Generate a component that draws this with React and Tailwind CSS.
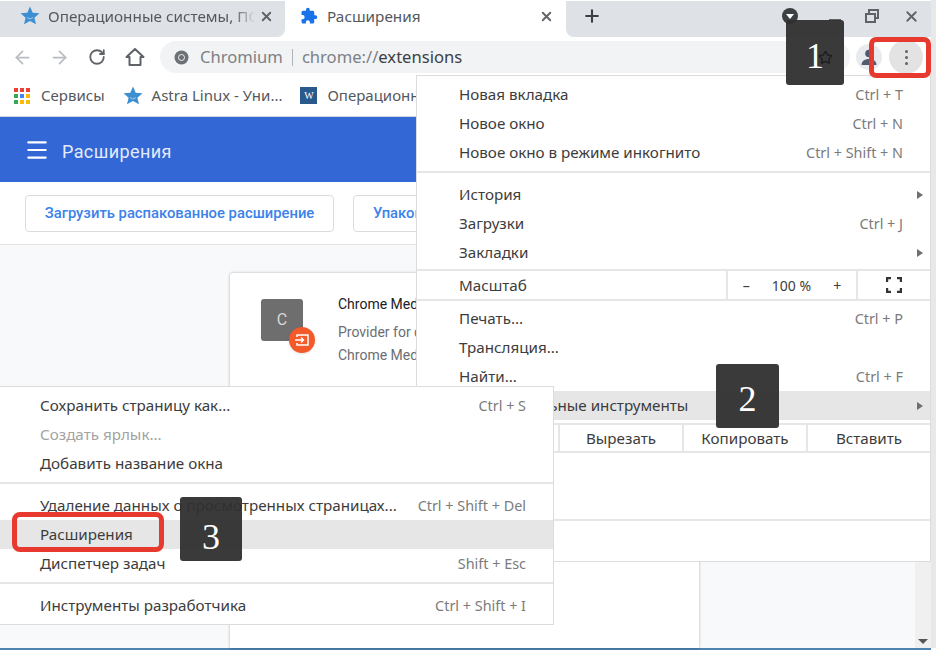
import { ArrowLeft, ArrowRight, RotateCw, X, Plus, Menu, Star } from "lucide-react";

function AstraStar({ size = 20 }) {
  return (
    <svg width={size} height={size} viewBox="0 0 20 20" className="shrink-0">
      <path d="M10 0.5l2.700 6.200 6.800.6-5.100 4.400 1.600 6.600L10 14.900l-6 3.400 1.600-6.600L.5 7.300l6.800-.6z" fill="#3d8fd1" />
      <path d="M7 11.500l3 1.500 3-1.500" fill="none" stroke="#9cc9ec" strokeWidth="1" />
    </svg>
  );
}

function MenuRow({ label, shortcut, active, arrow, muted, inset }) {
  return (
    <div className={`h-[29px] shrink-0 flex items-center justify-between ${active ? "bg-[#e6e6e6]" : ""}`}>
      <span className={`${inset ? "pl-[42px]" : "pl-10"} text-[15.2px] whitespace-nowrap ${muted ? "text-[#a3a3a3]" : "text-[#3c3c3c]"}`}>{label}</span>
      {shortcut && <span className="pr-[27px] text-[14.4px] text-[#7b7b7b] whitespace-nowrap">{shortcut}</span>}
      {arrow && <span className="w-0 h-0 mr-[7px] border-y-[4px] border-y-transparent border-l-[6px] border-l-[#6f6f6f]" />}
    </div>
  );
}

function Badge({ className, children }) {
  return (
    <div className={`absolute bg-[#2f2f2f]/95 rounded-[3px] text-white font-['Liberation_Serif',serif] text-[36px] leading-none flex items-center justify-center ${className}`}>
      {children}
    </div>
  );
}

export default function App() {
  return (
    <div className="relative w-[936px] h-[651px] overflow-hidden bg-white flex font-['Noto_Sans','Open_Sans',sans-serif]">
      <div className="w-[931px] h-[648px] flex flex-col shrink-0 border-b-2 border-[#4d83b0] box-content">
        {/* tabs */}
        <div className="h-[36px] mt-px bg-white flex text-[15.3px] text-[#55585c] shrink-0">
          <div className="w-[285px] pb-[6px] bg-[#dee1e6] rounded-br-lg flex items-center pl-[20px] pr-[11px]">
            <AstraStar />
            <span className="ml-[8px] w-[207px] overflow-hidden whitespace-nowrap [mask-image:linear-gradient(to_right,black_90%,transparent)]">Операционные системы, ПО</span>
            <X size={15} strokeWidth={3} className="ml-auto text-[#5f6368]" />
          </div>
          <div className="w-[281px] pb-[6px] flex items-center pl-[15px] pr-[12px]">
            <svg width="18" height="18" viewBox="0 0 24 24" fill="#1a73e8"><path d="M20.500 11H19V7a2 2 0 0 0-2-2h-4V3.500a2.500 2.500 0 0 0-5 0V5H4a2 2 0 0 0-2 2v3.800h1.500a2.700 2.700 0 0 1 0 5.400H2V20a2 2 0 0 0 2 2h3.800v-1.500a2.700 2.700 0 0 1 5.400 0V22H17a2 2 0 0 0 2-2v-4h1.500a2.500 2.500 0 0 0 0-5z" /></svg>
            <span className="ml-[9px]">Расширения</span>
            <X size={15} strokeWidth={3} className="ml-auto text-[#5f6368]" />
          </div>
          <div className="flex-1 pb-[6px] bg-[#dee1e6] rounded-bl-lg flex items-center">
            <Plus size={20} strokeWidth={2.5} className="ml-[16px] text-[#3c4043]" />
            <div className="ml-[180px] w-4 h-4 rounded-full bg-[#3c4043] flex items-center justify-center">
              <span className="w-0 h-0 border-x-[4px] border-x-transparent border-t-[5px] border-t-white" />
            </div>
            <span className="ml-[31px] mt-[8px] w-[12px] h-[2px] bg-[#5f6368]" />
            <svg width="14" height="14" viewBox="0 0 14 14" fill="none" stroke="#5f6368" strokeWidth="2" className="ml-[24px]">
              <path d="M4 4V1h9v8h-3M1 5h9v8H1z" />
            </svg>
            <X size={17} strokeWidth={2.5} className="ml-[24px] text-[#5f6368]" />
          </div>
        </div>
        {/* toolbar */}
        <div className="h-[38px] pt-[2px] bg-white flex items-center shrink-0 pl-[12px]">
          <ArrowLeft size={21} className="text-[#b9bcc0]" />
          <ArrowRight size={21} className="ml-[16px] text-[#b9bcc0]" />
          <RotateCw size={18} strokeWidth={2.4} className="ml-[18px] text-[#5f6368]" />
          <svg width="20" height="20" viewBox="0 0 20 20" fill="none" stroke="#5f6368" strokeWidth="2" strokeLinejoin="round" className="ml-[19px]">
            <path d="M10 2 1.500 10H4.500v8h11v-8h3z" />
          </svg>
          <div className="ml-[15px] w-[690px] h-[32px] rounded-full bg-[#f1f3f4] flex items-center pl-[14px] text-[16.6px] text-[#7d8186] whitespace-nowrap">
            <svg width="15" height="15" viewBox="0 0 15 15">
              <circle cx="7.500" cy="7.500" r="7" fill="#6d7074" />
              <circle cx="7.500" cy="7.500" r="3" fill="#6d7074" stroke="#f1f3f4" strokeWidth="1" />
            </svg>
            <span className="ml-[11px]">Chromium</span>
            <span className="mx-[9px] h-[17px] w-px bg-[#b0b3b7]" />
            <span>chrome://<span className="text-[#3c4043]">extensions</span></span>
          </div>
          <span className="ml-[6px] w-[26px] h-[26px] rounded-full bg-[#e8eaed] flex items-center justify-center">
            <svg width="18" height="18" viewBox="0 0 18 18" fill="#4f5b70">
              <circle cx="9" cy="5.500" r="3.800" />
              <path d="M1.500 17c0-4 3.500-6 7.500-6s7.500 2 7.500 6z" />
            </svg>
          </span>
          <span className="ml-[7px] w-[34px] h-[34px] rounded-full bg-[#e3e3e3] flex flex-col items-center justify-center gap-[3px]">
            <i className="w-[3px] h-[3px] rounded-full bg-[#5f6368]" />
            <i className="w-[3px] h-[3px] rounded-full bg-[#5f6368]" />
            <i className="w-[3px] h-[3px] rounded-full bg-[#5f6368]" />
          </span>
        </div>
        {/* bookmarks */}
        <div className="h-[42px] bg-white border-b border-[#d5d7da] flex items-center text-[15px] text-[#55585c] shrink-0 pl-[14px] whitespace-nowrap">
          <div className="grid grid-cols-3 gap-[2px]">
            {["bg-[#ea4335]", "bg-[#ea4335]", "bg-[#ea4335]", "bg-[#34a853]", "bg-[#4285f4]", "bg-[#fbbc04]", "bg-[#34a853]", "bg-[#fbbc04]", "bg-[#fbbc04]"].map((c, i) => (
              <i key={i} className={`w-[4px] h-[4px] ${c}`} />
            ))}
          </div>
          <span className="ml-[11px]">Сервисы</span>
          <span className="ml-[18px]"><AstraStar /></span>
          <span className="ml-[9px]">Astra Linux - Уни...</span>
          <span className="ml-[18px] w-[17px] h-[17px] bg-[#2a5a8c] text-white text-[10px] leading-[17px] text-center font-['Liberation_Serif',serif]">W</span>
          <span className="ml-[10px]">Операционные</span>
        </div>
        {/* header */}
        <div className="h-[65px] bg-[#3367d6] flex items-center pl-[24px] text-white shrink-0">
          <Menu size={26} strokeWidth={2} />
          <span className="ml-[12px] mt-[3px] text-[18px] tracking-[0.4px] font-['Roboto',sans-serif] text-[#e3ebfa]">Расширения</span>
        </div>
        {/* action buttons */}
        <div className="h-[63px] bg-white border-b border-[#e3e3e3] flex items-center pl-[25px] gap-[19px] shrink-0 font-['Roboto',sans-serif]">
          <div className="h-[37px] w-[309px] border border-[#dadce0] rounded flex items-center justify-center text-[14.8px] font-medium text-[#3b82ea] whitespace-nowrap">Загрузить распакованное расширение</div>
          <div className="h-[37px] w-[200px] border border-[#dadce0] rounded flex items-center pl-[19px] text-[14.8px] font-medium text-[#3b82ea]">Упаковать</div>
        </div>
        {/* content */}
        <div className="flex-1 bg-[#f8f9fa] flex relative min-h-0 pl-[230px] pt-[28px] font-['Roboto',sans-serif]">
          <div className="w-[469px] bg-white shadow-[0_0_3px_rgba(0,0,0,0.3)] rounded-t-[3px] flex pl-[31px] pt-[26px]">
            <div className="relative w-[42px] h-[42px] rounded-[3px] bg-[#6e6e6e] text-[#d8d8d8] text-[16px] flex items-center justify-center">
              C
              <span className="absolute left-[28px] top-[28px] w-[26px] h-[26px] rounded-full bg-[#f4592a] shadow flex items-center justify-center">
                <svg width="16" height="14" viewBox="0 0 16 14" fill="none" stroke="white" strokeWidth="1.500"><path d="M3 4V2h11v10H3v-2M1 7h8M7 4.500 9.500 7 7 9.500" /></svg>
              </span>
            </div>
            <div className="ml-[35px] -mt-[6px] whitespace-nowrap text-[14px] text-[#6b6e72] leading-[23px]">
              <div className="text-[#202124] mb-[5px]">Chrome Media Router</div>
              <div>Provider for discovery</div>
              <div>Chrome Media Router</div>
            </div>
          </div>
          <div className="absolute right-0 top-[316px] bottom-0 w-[16px] bg-[#f0f0f0] flex items-end justify-center pb-[4px]">
            <span className="w-0 h-0 border-x-[5px] border-x-transparent border-t-[5px] border-t-[#555]" />
          </div>
        </div>
      </div>
      <div className="flex-1 bg-[#e8e8e8] h-[648px]" />

      {/* chrome menu */}
      <div className="absolute left-[416px] top-[75px] w-[515px] h-[487px] bg-white border border-[#dcdcdc]">
        <div className="h-[97px] pt-[4px] border-b-2 border-[#e6e6e6]">
          <MenuRow inset label="Новая вкладка" shortcut="Ctrl + T" />
          <MenuRow inset label="Новое окно" shortcut="Ctrl + N" />
          <MenuRow inset label="Новое окно в режиме инкогнито" shortcut="Ctrl + Shift + N" />
        </div>
        <div className="h-[98px] pt-[7px] border-b-2 border-[#e6e6e6]">
          <MenuRow inset label="История" arrow />
          <MenuRow inset label="Загрузки" shortcut="Ctrl + J" />
          <MenuRow inset label="Закладки" arrow />
        </div>
        <div className="h-[30px] flex items-center justify-between border-b-2 border-[#e6e6e6] text-[#3c3c3c]">
          <span className="pl-[42px] text-[15.2px]">Масштаб</span>
          <div className="flex h-full text-[14px]">
            <div className="w-[132px] border-x-2 border-[#e6e6e6] flex items-center justify-center gap-[22px]">
              <span>–</span><span>100 %</span><span>+</span>
            </div>
            <div className="w-[72px] flex items-center justify-center">
              <svg width="16" height="16" viewBox="0 0 16 16" fill="none" stroke="#333" strokeWidth="2.400"><path d="M1 5V1h4M11 1h4v4M15 11v4h-4M5 15H1v-4" /></svg>
            </div>
          </div>
        </div>
        <div className="pt-[3px]">
          <MenuRow inset label="Печать..." shortcut="Ctrl + P" />
          <MenuRow inset label="Трансляция..." />
          <MenuRow inset label="Найти..." shortcut="Ctrl + F" />
          <MenuRow inset label="Дополнительные инструменты" active arrow />
        </div>
        <div className="mt-[3px] h-[30px] flex items-center justify-between border-y-2 border-[#e6e6e6] text-[15.2px] text-[#3c3c3c]">
          <span className="pl-[42px]">Изменить</span>
          <div className="flex h-full">
            {["Вырезать", "Копировать", "Вставить"].map((t) => (
              <span key={t} className="w-[124px] border-l-2 border-[#e6e6e6] flex items-center justify-center">{t}</span>
            ))}
          </div>
        </div>
        <div className="h-[68px] border-b-2 border-[#e6e6e6]" />
      </div>

      {/* more tools submenu */}
      <div className="absolute left-0 top-[386px] w-[554px] h-[239px] bg-white border border-l-0 border-[#dcdcdc] pt-[4px]">
        <MenuRow label="Сохранить страницу как..." shortcut="Ctrl + S" />
        <MenuRow label="Создать ярлык..." muted />
        <MenuRow label="Добавить название окна" />
        <div className="h-[6px] border-b-2 border-[#e6e6e6] mb-[7px]" />
        <MenuRow label="Удаление данных о просмотренных страницах..." shortcut="Ctrl + Shift + Del" />
        <MenuRow label="Расширения" active />
        <MenuRow label="Диспетчер задач" shortcut="Shift + Esc" />
        <div className="h-[6px] border-b-2 border-[#e6e6e6] mb-[7px]" />
        <MenuRow label="Инструменты разработчика" shortcut="Ctrl + Shift + I" />
      </div>

      {/* step callouts */}
      <Badge className="left-[786px] top-[20px] w-[58px] h-[65px] pt-[6px]">1</Badge>
      <Badge className="left-[716px] top-[364px] w-[63px] h-[64px] pt-[6px]">2</Badge>
      <Badge className="left-[180px] top-[497px] w-[62px] h-[64px] pt-[16px]">3</Badge>
      <div className="absolute left-[869px] top-[37px] w-[62px] h-[41px] rounded-[7px] border-[5px] border-[#e8392e]" />
      <div className="absolute left-[12px] top-[512px] w-[152px] h-[40px] rounded-[8px] border-[5px] border-[#e8392e]" />
      <Star size={15} className="absolute left-[818px] top-[50px] text-[#1c1c1c]" />
    </div>
  );
}
